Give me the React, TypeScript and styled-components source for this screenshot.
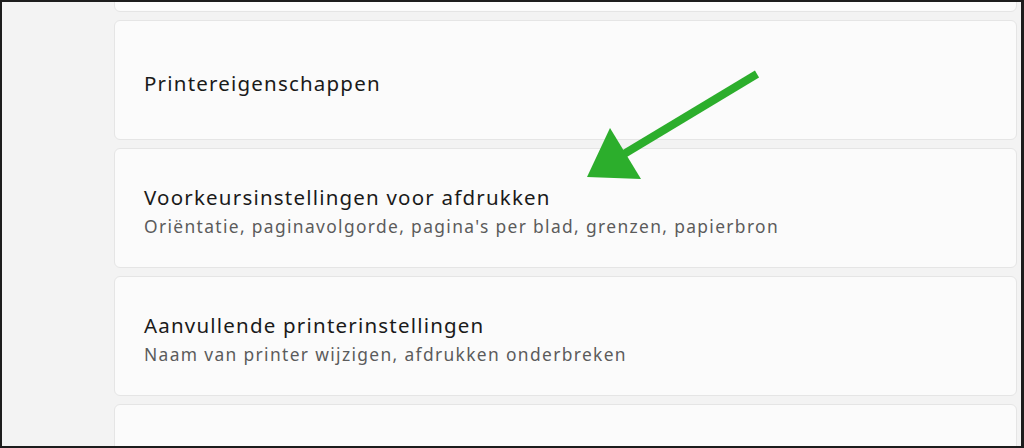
import React from 'react';
import styled, { createGlobalStyle } from 'styled-components';

const GlobalStyle = createGlobalStyle`
  html, body {
    margin: 0;
    padding: 0;
    background: #f3f3f3;
  }
  * {
    box-sizing: border-box;
  }
`;

const Frame = styled.div`
  position: relative;
  width: 1024px;
  height: 448px;
  border: 2px solid #1c1c1c;
  border-right-width: 3px;
  background: #f3f3f3;
  overflow: hidden;
  font-family: 'Segoe UI', 'Noto Sans', 'Open Sans', sans-serif;
`;

const SettingsList = styled.div`
  display: flex;
  flex-direction: column;
  gap: 8px;
  margin-top: -110px;
  padding: 0 4px 0 112px;
`;

const Card = styled.div`
  height: 120px;
  flex-shrink: 0;
  display: flex;
  flex-direction: column;
  justify-content: center;
  padding: 6px 29px 0;
  background: #fbfbfb;
  border: 1px solid #e5e5e5;
  border-radius: 6px;
`;

const Title = styled.div`
  font-size: 20.5px;
  line-height: 29px;
  letter-spacing: 1.2px;
  color: #1a1a1a;
  white-space: nowrap;
`;

const Subtitle = styled.div`
  font-size: 17.4px;
  line-height: 28px;
  letter-spacing: 1.35px;
  color: #5b5b5b;
  white-space: nowrap;
`;

const Arrow = styled.svg`
  position: absolute;
  left: 0;
  top: 0;
  pointer-events: none;
`;

const items: { title?: string; subtitle?: string }[] = [
  {},
  { title: 'Printereigenschappen' },
  {
    title: 'Voorkeursinstellingen voor afdrukken',
    subtitle: "Oriëntatie, paginavolgorde, pagina's per blad, grenzen, papierbron",
  },
  {
    title: 'Aanvullende printerinstellingen',
    subtitle: 'Naam van printer wijzigen, afdrukken onderbreken',
  },
  {},
];

export default function App() {
  return (
    <>
      <GlobalStyle />
      <Frame>
        <SettingsList>
          {items.map((item, i) => (
            <Card key={i}>
              {item.title && <Title>{item.title}</Title>}
              {item.subtitle && <Subtitle>{item.subtitle}</Subtitle>}
            </Card>
          ))}
        </SettingsList>
        <Arrow width="1024" height="448" viewBox="-2 -2 1024 448">
          <line x1="753" y1="70" x2="615" y2="153" stroke="#2cae2c" strokeWidth="8" />
          <polygon points="583,173 606,124 637,175" fill="#2cae2c" />
        </Arrow>
      </Frame>
    </>
  );
}
